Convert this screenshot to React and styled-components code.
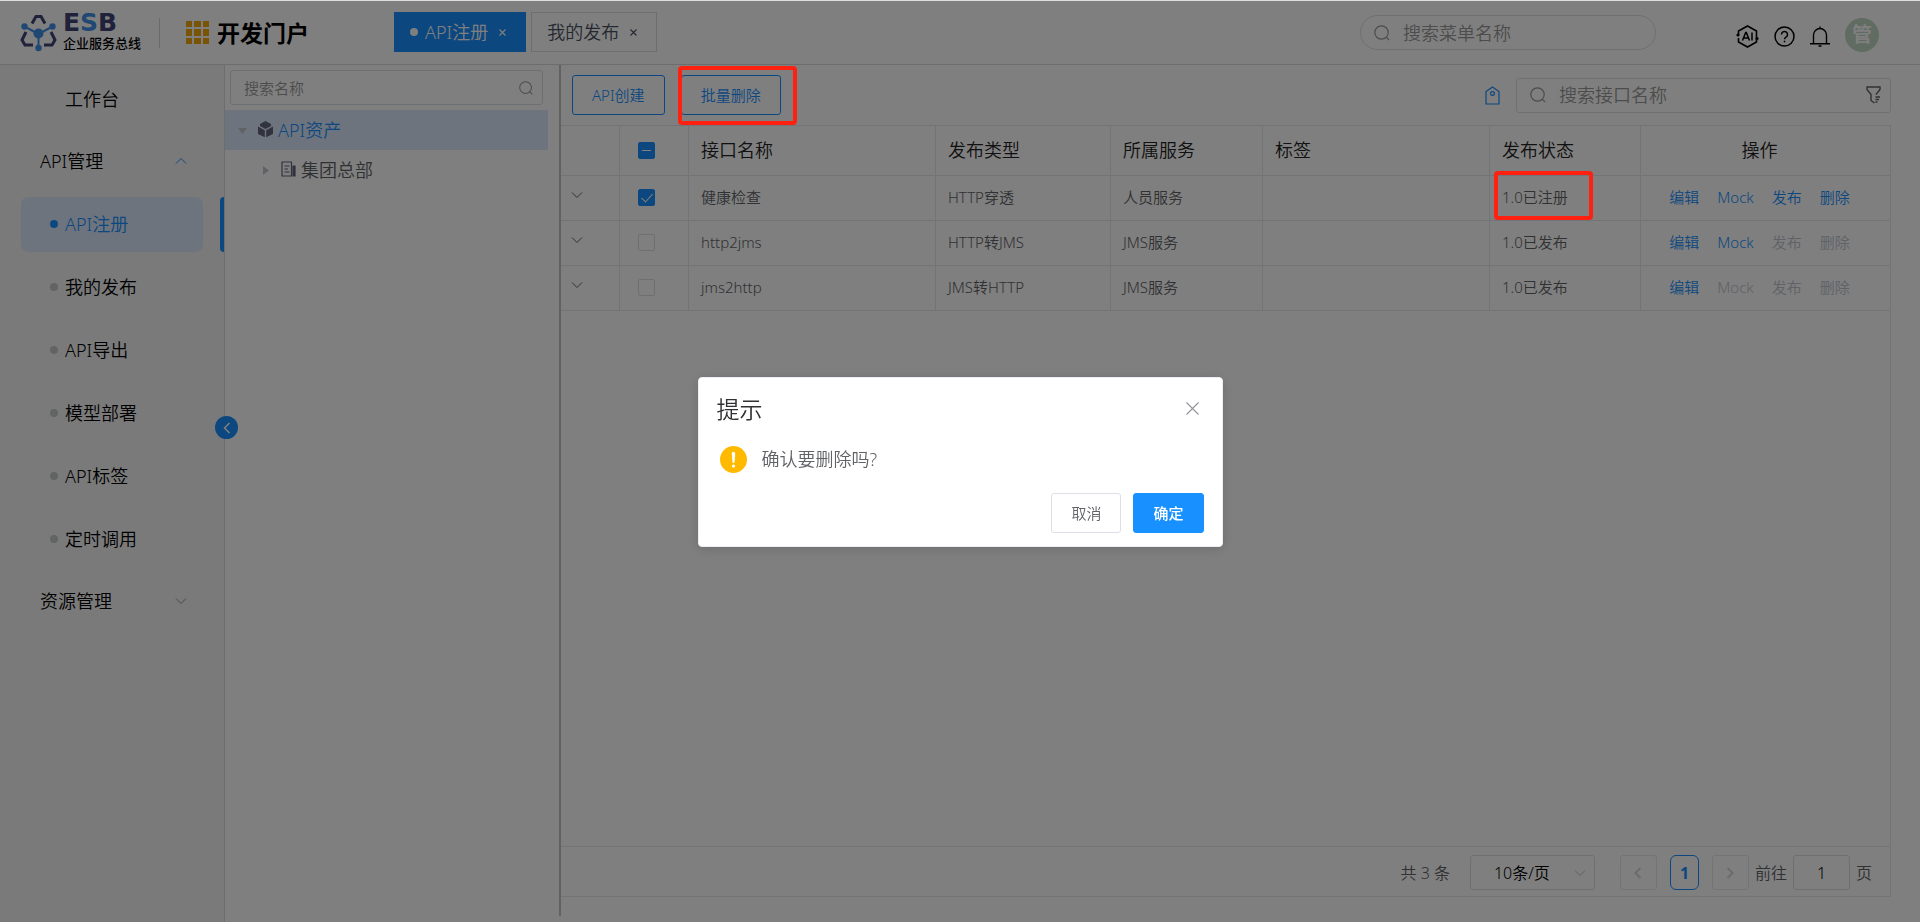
import { useState } from 'react';
import styled, { createGlobalStyle, css } from 'styled-components';

const GlobalStyle = createGlobalStyle`
    * { box-sizing: border-box; }
    body {
        margin: 0;
        background: #fff;
        color: #606266;
        font-family: "Noto Sans", "Noto Sans CJK SC", sans-serif;
        font-size: 15px;
        font-weight: 350;
        line-height: 20px;
    }
    button, input, select { font: inherit; color: inherit; }
    button { cursor: pointer; padding: 0; border: 0; background: none; }
    a { text-decoration: none; }
    svg { display: block; flex: none; }
`;

const Page = styled.div`
    display: flex;
    flex-direction: column;
    min-height: 100vh;
    border-top: 1px solid #dcdfe0;
`;

const Header = styled.header`
    display: flex;
    align-items: center;
    height: 64px;
    padding: 0 41px 0 20px;
    border-bottom: 1px solid #dadada;
`;

const Logo = styled.a`
    display: flex;
    align-items: center;
    gap: 6px;
    width: 140px;
    height: 30px;
    border-right: 1px solid #d4d6dc;
    white-space: nowrap;
`;

const LogoText = styled.div`
    margin-top: -4px;
`;

const LogoName = styled.div`
    color: #3f4474;
    font-family: "DejaVu Sans", sans-serif;
    font-size: 25px;
    font-weight: 700;
    line-height: 24px;

    span { color: #4090e6; }
`;

const LogoSub = styled.div`
    color: #000;
    font-size: 13px;
    font-weight: 500;
    line-height: 16px;
`;

const Portal = styled.div`
    display: flex;
    align-items: center;
    gap: 8px;
    width: 234px;
    padding-left: 26px;
    color: #000;
    font-size: 23px;
    font-weight: 700;
    white-space: nowrap;
`;

const Tabs = styled.nav`
    display: flex;
    gap: 5px;
    flex: 1;
    height: 40px;
    margin-bottom: 1px;
`;

const Tab = styled.div`
    display: flex;
    align-items: center;
    height: 40px;
    padding: 0 19px 0 15px;
    border: 1px solid ${p => (p.$active ? '#1890ff' : '#d8dce5')};
    background: ${p => (p.$active ? '#1890ff' : '#fff')};
    color: ${p => (p.$active ? '#fff' : '#495060')};
    font-size: 18px;
    white-space: nowrap;

    a { color: inherit; }
    button { margin-left: 11px; }
`;

const Dot = styled.i`
    width: 8px;
    height: 8px;
    flex: none;
    margin-right: 7px;
    border-radius: 50%;
    background: ${p => p.$color};
`;

const SearchBox = styled.label`
    display: flex;
    align-items: center;
    width: ${p => p.$width || '100%'};
    height: 35px;
    padding: 0 9px 0 13px;
    border: 1px solid #dcdfe6;
    border-radius: ${p => (p.$round ? 18 : 3)}px;
    color: #999;
    font-size: ${p => p.$size || 18}px;

    input {
        flex: 1;
        min-width: 0;
        padding: 0 0 0 ${p => p.$inset || 0}px;
        border: 0;
        outline: 0;
        background: none;
        color: #606266;
    }
    input::placeholder { color: #999; }
`;

const HeaderIcons = styled.div`
    display: flex;
    align-items: center;
    gap: 15px;
    margin-left: 80px;
    padding-top: 7px;
    color: #000;
`;

const Avatar = styled.button`
    width: 34px;
    height: 34px;
    margin: -3px 0 0;
    border-radius: 50%;
    background: #c0d6c4;
    color: #fff;
    font-size: 20px;
    font-weight: 700;
`;

const Body = styled.div`
    display: flex;
    flex: 1;
`;

const Sidebar = styled.aside`
    position: relative;
    display: flex;
    flex-direction: column;
    width: 225px;
    flex: none;
    padding-top: 4px;
    border-right: 1px solid #dcdcdc;
    background: #f5f5f5;
    color: #000;
    font-size: 18px;
`;

const Collapse = styled.button`
    position: absolute;
    right: -14px;
    top: 351px;
    display: grid;
    place-items: center;
    width: 23px;
    height: 23px;
    border-radius: 50%;
    background: #1890ff;
    color: #fff;
`;

const MenuGroup = styled.button`
    display: flex;
    align-items: center;
    justify-content: space-between;
    width: 100%;
    height: 62px;
    padding: 0 37px 2px ${p => p.$indent}px;
    text-align: left;

    svg { color: ${p => (p.$open ? '#1890ff' : '#909399')}; }
`;

const MenuLink = styled.a`
    display: flex;
    align-items: center;
    height: 55px;
    margin: 4px 21px;
    padding: 0 0 2px 29px;
    border-radius: 7px;
    color: #000;

    ${p => p.$active && css`
        position: relative;
        background: #dde9fb;
        color: #1890ff;

        &::after {
            content: "";
            position: absolute;
            top: 0;
            right: -21px;
            width: 4px;
            height: 100%;
            border-radius: 4px 0 0 4px;
            background: #1890ff;
        }
    `}
`;

const TreePanel = styled.section`
    width: 336px;
    flex: none;
    margin-bottom: 6px;
    border-right: 2px solid #c4c4c4;
`;

const TreeSearch = styled.div`
    padding: 5px 16px 5px 5px;
`;

const TreeRow = styled.button`
    display: flex;
    align-items: center;
    width: 323px;
    height: 40px;
    padding-left: ${p => p.$indent}px;
    background: ${p => (p.$active ? '#dde9fb' : 'none')};
    color: ${p => (p.$active ? '#1890ff' : '#606266')};
    font-size: 18px;

    svg:first-child { margin-right: 11px; color: #c0c4cc; }
    svg + svg { margin: 0 5px 2px 0; color: #62667c; }
`;

const Main = styled.main`
    display: flex;
    flex-direction: column;
    flex: 1;
    min-width: 0;
    padding: 0 29px 25px 0;
`;

const Toolbar = styled.div`
    display: flex;
    align-items: center;
    justify-content: space-between;
    height: 60px;
    padding-left: 11px;
`;

const ToolGroup = styled.div`
    display: flex;
    align-items: center;
    gap: 16px;
`;

const Marked = styled.div`
    position: relative;
`;

/* annotation frame, stays bright above the modal mask */
const Mark = styled.span`
    position: absolute;
    z-index: 20;
    inset: ${p => p.$inset};
    border: 4px solid #ff2010;
    border-radius: 4px;
    pointer-events: none;
`;

const Button = styled.button`
    height: 40px;
    padding: 0 19px;
    border: 1px solid ${p => (p.$plain ? '#dcdfe6' : '#1890ff')};
    border-radius: 3px;
    background: ${p => (p.$primary ? '#1890ff' : '#fff')};
    color: ${p => (p.$primary ? '#fff' : p.$plain ? '#606266' : '#1890ff')};
    font-weight: ${p => (p.$primary ? 500 : 'inherit')};
    white-space: nowrap;
`;

const TagButton = styled.button`
    color: #1890ff;
`;

const Panel = styled.div`
    display: flex;
    flex-direction: column;
    flex: 1;
    border: 1px solid #e6e8f0;
    border-left: 0;
`;

const Table = styled.table`
    width: 100%;
    table-layout: fixed;
    border-spacing: 0;

    th, td {
        height: 45px;
        padding: 0 12px 2px;
        border-right: 1px solid #e6e8f0;
        border-bottom: 1px solid #e6e8f0;
        text-align: left;
        vertical-align: middle;
    }
    th {
        height: 50px;
        padding-bottom: 1px;
        color: #222;
        font-size: 18px;
        font-weight: inherit;
    }
    th:last-child, td:last-child {
        padding-right: 24px;
        border-right: 0;
        text-align: center;
    }
`;

const Col = styled.col`
    width: ${p => (p.$width ? p.$width + 'px' : 'auto')};
`;

const ExpandButton = styled.button`
    display: block;
    margin-left: -2px;
    padding-bottom: 4px;
    color: #606266;
`;

const Checkbox = styled.input`
    appearance: none;
    position: relative;
    display: block;
    width: 17px;
    height: 17px;
    margin: 0 0 0 6px;
    border: 1px solid ${p => (p.checked || p.$partial ? '#1890ff' : '#dcdfe6')};
    border-radius: 2px;
    background: ${p => (p.checked || p.$partial ? '#1890ff' : '#fff')};

    ${p => p.checked && css`
        &::after {
            content: "";
            position: absolute;
            left: 5px;
            top: 1px;
            width: 5px;
            height: 10px;
            border: solid #fff;
            border-width: 0 1px 1px 0;
            transform: rotate(42deg);
        }
    `}
    ${p => p.$partial && css`
        &::after {
            content: "";
            position: absolute;
            left: 3px;
            top: 7px;
            width: 9px;
            height: 1px;
            background: #fff;
        }
    `}
`;

const StatusCell = styled.td`
    position: relative;
`;

const Actions = styled.div`
    display: flex;
    justify-content: center;
    gap: 18px;
`;

const ActionButton = styled.button`
    color: #1890ff;
    &:disabled { color: #c0c4cc; cursor: default; }
`;

const Pagination = styled.footer`
    display: flex;
    align-items: center;
    justify-content: flex-end;
    height: 50px;
    margin-top: auto;
    padding: 2px 18px 0 0;
    border-top: 1px solid #e6e8f0;
    font-size: 16px;
    white-space: nowrap;
`;

const PageSize = styled.label`
    position: relative;
    width: 125px;
    margin: 0 25px 0 20px;
    color: #000;

    select {
        appearance: none;
        width: 100%;
        height: 35px;
        padding: 0 0 0 23px;
        border: 1px solid #dcdfe6;
        border-radius: 3px;
        background: #fff;
    }
    svg {
        position: absolute;
        right: 9px;
        top: 12px;
        color: #c0c4cc;
    }
`;

const PageButton = styled.button`
    display: grid;
    place-items: center;
    width: ${p => (p.$current ? 29 : 37)}px;
    height: 35px;
    margin-right: ${p => p.$gap}px;
    border: 1px solid ${p => (p.$current ? '#1890ff' : '#e6e8ee')};
    border-radius: ${p => (p.$current ? 6 : 3)}px;
    color: ${p => (p.$current ? '#1890ff' : '#d4d7de')};
    font-weight: 700;
`;

const Jumper = styled.label`
    display: flex;
    align-items: center;
    gap: 6px;

    input {
        width: 57px;
        height: 35px;
        padding: 0;
        border: 1px solid #dcdfe6;
        border-radius: 3px;
        color: #000;
        text-align: center;
    }
`;

const Mask = styled.div`
    position: fixed;
    z-index: 10;
    inset: 1px 0 0;
    display: grid;
    place-items: center;
    background: rgba(0, 0, 0, 0.5);
`;

const Dialog = styled.div`
    width: 525px;
    padding: 17px 18px 13px;
    border: 1px solid #ebeef5;
    border-radius: 4px;
    background: #fff;
    box-shadow: 0 2px 12px rgba(0, 0, 0, 0.15);
`;

const DialogHead = styled.div`
    display: flex;
    align-items: center;
    justify-content: space-between;
    height: 28px;
    padding-right: 5px;
    color: #909399;

    h2 {
        margin: 0;
        color: #303133;
        font-size: 23px;
        font-weight: inherit;
    }
`;

const DialogBody = styled.div`
    display: flex;
    align-items: center;
    gap: 15px;
    padding: 23px 3px 20px;
    font-size: 18px;

    p { margin: 0; }
`;

const DialogFoot = styled.div`
    display: flex;
    justify-content: flex-end;
    gap: 12px;
`;

const LogoIcon = () => (
    <svg width="37" height="38" viewBox="0 0 37 38" fill="none">
        <g stroke="#3f4474" strokeWidth="3">
            <path d="M12 9.500l4-7h5l4 7" />
            <path d="M6 18l-4 8 3 5h8" />
            <path d="M31 18l4 8-3 5h-8" />
        </g>
        <path d="M4.500 12.500L18.500 20l14-7.500M18.500 20v14" stroke="#4090e6" strokeWidth="2" />
        <g fill="#4090e6">
            <circle cx="18.500" cy="19.500" r="5" />
            <circle cx="4.500" cy="12.500" r="3.200" />
            <circle cx="32.500" cy="12.500" r="3.200" />
            <circle cx="18.500" cy="34" r="3.200" />
        </g>
    </svg>
);

const GridIcon = () => (
    <svg width="23" height="23" viewBox="0 0 23 23" fill="#f5a80c">
        {[[0, 6], [8, 7], [17, 6]].map(([y, h]) => (
            <path key={y} d={`M0 ${y}h6v${h}h-6zM8 ${y}h7v${h}h-7zM17 ${y}h6v${h}h-6z`} />
        ))}
    </svg>
);

const SearchIcon = ({ size = 16 }) => (
    <svg width={size} height={size} viewBox="0 0 16 16" fill="none" stroke="currentColor" strokeWidth="1.200">
        <circle cx="7.500" cy="7.500" r="6.700" />
        <path d="M12.200 12.200l3 3" />
    </svg>
);

const Chevron = ({ dir = 'down', size = 12, weight = 1 }) => {
    const paths = {
        down: 'M1 3.500l5 5 5-5',
        up: 'M1 8.500l5-5 5 5',
        left: 'M8.500 1l-5 5 5 5',
        right: 'M3.500 1l5 5-5 5',
    };
    return (
        <svg width={size} height={size} viewBox="0 0 12 12" fill="none" stroke="currentColor" strokeWidth={weight}>
            <path d={paths[dir]} />
        </svg>
    );
};

const CloseIcon = ({ size = 7 }) => (
    <svg width={size} height={size} viewBox={`0 0 ${size} ${size}`} fill="none" stroke="currentColor" strokeWidth="1.100">
        <path d={`M.5.5L${size - 0.5} ${size - 0.5}M${size - 0.5}.5L.5 ${size - 0.5}`} />
    </svg>
);

const AiIcon = () => (
    <svg width="23" height="23" viewBox="0 0 23 23" fill="none" stroke="currentColor" strokeWidth="1.600">
        <path d="M2.500 9.500V6l9-5 9 5v7M20.500 13.500V17l-9 5-9-5v-4" />
        <path d="M6.500 15.500l3.200-8h.6l3.200 8M7.700 13h4.600M16 7.500v8" strokeWidth="1.500" />
        <circle cx="2" cy="10" r="1.600" fill="currentColor" stroke="none" />
        <circle cx="21" cy="13.500" r="1.600" fill="currentColor" stroke="none" />
    </svg>
);

const HelpIcon = () => (
    <svg width="21" height="21" viewBox="0 0 21 21" fill="none" stroke="currentColor" strokeWidth="1.500">
        <circle cx="10.500" cy="10.500" r="9.500" />
        <path d="M7.500 8.500a3 3 0 1 1 4.500 2.600c-1 .6-1.500 1-1.500 2.200" />
        <path d="M10.500 14.700v1.600" />
    </svg>
);

const BellIcon = () => (
    <svg width="20" height="21" viewBox="0 0 20 21" fill="none" stroke="currentColor" strokeWidth="1.400">
        <path d="M3.500 17.500V9a6.500 6.500 0 0 1 13 0v8.500M0 17.800h20M10 .5v2M8.500 20h3" />
    </svg>
);

const TagIcon = () => (
    <svg width="15" height="19" viewBox="0 0 15 19" fill="none" stroke="currentColor" strokeWidth="1.200">
        <path d="M1 5.500L7.500 1 14 5.500V18H1z" />
        <circle cx="7.500" cy="7.500" r="1.900" />
    </svg>
);

const FilterIcon = () => (
    <svg width="15" height="18" viewBox="0 0 15 18" fill="none" stroke="#606266" strokeWidth="1.400">
        <path d="M8.500 17L5 14.500V8.500L1 3.500V1h13v2.500L10 8.500M9.500 11h4.500M9.500 13.500h3.500M9.500 16h2" />
    </svg>
);

const Caret = ({ open }) => (
    <svg width="9" height="9" viewBox="0 0 9 9" fill="currentColor">
        <path d={open ? 'M0 2h9L4.500 8z' : 'M2 0l6 4.500L2 9z'} />
    </svg>
);

const CubeIcon = () => (
    <svg width="15" height="17" viewBox="0 0 15 17" fill="currentColor">
        <path d="M7.500 0l5.500 3v2L7.500 8 2 5V3zM0 5.500l6.800 3.800v7L0 13zM15 5.500L8.200 9.300v7L15 13z" />
    </svg>
);

const OfficeIcon = () => (
    <svg width="15" height="16" viewBox="0 0 15 16" fill="none" stroke="currentColor" strokeWidth="1.200">
        <path d="M1 1h9.500v14H1zM3.500 5h5M3.500 8h3.500M3.500 11h5" />
        <path d="M12 5h2v10h-2z" fill="currentColor" />
    </svg>
);

const WarningIcon = () => (
    <svg width="27" height="27" viewBox="0 0 27 27">
        <circle cx="13.500" cy="13.500" r="13.500" fill="#ffba00" />
        <path d="M11.800 7.500a1.700 1.700 0 0 1 3.400 0l-.6 8.500a1.100 1.100 0 0 1-2.200 0z" fill="#fff" />
        <circle cx="13.500" cy="20" r="1.600" fill="#fff" />
    </svg>
);

const menu = ['API注册', '我的发布', 'API导出', '模型部署', 'API标签', '定时调用'];

const rows = [
    { name: '健康检查', type: 'HTTP穿透', service: '人员服务', status: '1.0已注册', enabled: ['编辑', 'Mock', '发布', '删除'], marked: true },
    { name: 'http2jms', type: 'HTTP转JMS', service: 'JMS服务', status: '1.0已发布', enabled: ['编辑', 'Mock'] },
    { name: 'jms2http', type: 'JMS转HTTP', service: 'JMS服务', status: '1.0已发布', enabled: ['编辑'] },
];

const actions = ['编辑', 'Mock', '发布', '删除'];

function TopBar() {
    return (
        <Header>
            <Logo href="#">
                <LogoIcon />
                <LogoText>
                    <LogoName>E<span>S</span>B</LogoName>
                    <LogoSub>企业服务总线</LogoSub>
                </LogoText>
            </Logo>
            <Portal><GridIcon />开发门户</Portal>
            <Tabs>
                <Tab $active>
                    <Dot $color="#fff" />
                    <a href="#register">API注册</a>
                    <button aria-label="关闭 API注册"><CloseIcon /></button>
                </Tab>
                <Tab>
                    <a href="#publish">我的发布</a>
                    <button aria-label="关闭 我的发布"><CloseIcon /></button>
                </Tab>
            </Tabs>
            <SearchBox $width="296px" $round $inset={13}>
                <SearchIcon />
                <input type="text" placeholder="搜索菜单名称" aria-label="搜索菜单名称" />
            </SearchBox>
            <HeaderIcons>
                <button aria-label="AI"><AiIcon /></button>
                <button aria-label="帮助"><HelpIcon /></button>
                <button aria-label="消息"><BellIcon /></button>
                <Avatar>管</Avatar>
            </HeaderIcons>
        </Header>
    );
}

function SideMenu() {
    return (
        <Sidebar>
            <MenuGroup $indent={65}>工作台</MenuGroup>
            <MenuGroup $indent={40} $open>API管理<Chevron dir="up" /></MenuGroup>
            {menu.map((item, i) => (
                <MenuLink key={item} href="#" $active={i === 0}>
                    <Dot $color={i === 0 ? '#1890ff' : '#c4c8c6'} />
                    {item}
                </MenuLink>
            ))}
            <MenuGroup $indent={40}>资源管理<Chevron /></MenuGroup>
            <Collapse aria-label="收起菜单"><Chevron dir="left" weight={1.5} /></Collapse>
        </Sidebar>
    );
}

function AssetTree() {
    return (
        <TreePanel>
            <TreeSearch>
                <SearchBox $size={15}>
                    <input type="text" placeholder="搜索名称" aria-label="搜索名称" />
                    <SearchIcon size={14} />
                </SearchBox>
            </TreeSearch>
            <TreeRow $indent={13} $active><Caret open /><CubeIcon />API资产</TreeRow>
            <TreeRow $indent={36}><Caret /><OfficeIcon />集团总部</TreeRow>
        </TreePanel>
    );
}

function ApiTable() {
    const [checked, setChecked] = useState([true, false, false]);
    const count = checked.filter(Boolean).length;
    const all = count === rows.length;

    const toggle = (index) => {
        setChecked(checked.map((c, i) => (i === index ? !c : c)));
    };

    return (
        <Table>
            <colgroup>
                <Col $width={59} />
                <Col $width={69} />
                <Col />
                <Col $width={175} />
                <Col $width={152} />
                <Col $width={227} />
                <Col $width={151} />
                <Col $width={249} />
            </colgroup>
            <thead>
                <tr>
                    <th />
                    <th>
                        <Checkbox
                            type="checkbox"
                            aria-label="全选"
                            checked={all}
                            $partial={count > 0 && !all}
                            onChange={() => setChecked(rows.map(() => !all))}
                        />
                    </th>
                    <th>接口名称</th>
                    <th>发布类型</th>
                    <th>所属服务</th>
                    <th>标签</th>
                    <th>发布状态</th>
                    <th>操作</th>
                </tr>
            </thead>
            <tbody>
                {rows.map((row, i) => (
                    <tr key={row.name}>
                        <td><ExpandButton aria-label={'展开 ' + row.name}><Chevron /></ExpandButton></td>
                        <td>
                            <Checkbox
                                type="checkbox"
                                aria-label={'选择 ' + row.name}
                                checked={checked[i]}
                                onChange={() => toggle(i)}
                            />
                        </td>
                        <td>{row.name}</td>
                        <td>{row.type}</td>
                        <td>{row.service}</td>
                        <td />
                        <StatusCell>
                            {row.status}
                            {row.marked && <Mark $inset="-5px 47px 0 4px" />}
                        </StatusCell>
                        <td>
                            <Actions>
                                {actions.map(a => (
                                    <ActionButton key={a} disabled={!row.enabled.includes(a)}>{a}</ActionButton>
                                ))}
                            </Actions>
                        </td>
                    </tr>
                ))}
            </tbody>
        </Table>
    );
}

function Pager() {
    return (
        <Pagination>
            <span>共 3 条</span>
            <PageSize>
                <select aria-label="每页条数">
                    <option>10条/页</option>
                    <option>20条/页</option>
                </select>
                <Chevron />
            </PageSize>
            <PageButton $gap={13} aria-label="上一页"><Chevron dir="left" weight={2} /></PageButton>
            <PageButton $gap={13} $current>1</PageButton>
            <PageButton $gap={6} aria-label="下一页"><Chevron dir="right" weight={2} /></PageButton>
            <Jumper>前往<input type="text" defaultValue="1" />页</Jumper>
        </Pagination>
    );
}

function ConfirmDialog({ onClose }) {
    return (
        <Mask>
            <Dialog role="dialog" aria-modal="true" aria-labelledby="confirm-title">
                <DialogHead>
                    <h2 id="confirm-title">提示</h2>
                    <button aria-label="关闭" onClick={onClose}><CloseIcon size={13} /></button>
                </DialogHead>
                <DialogBody>
                    <WarningIcon />
                    <p>确认要删除吗?</p>
                </DialogBody>
                <DialogFoot>
                    <Button $plain onClick={onClose}>取消</Button>
                    <Button $primary onClick={onClose}>确定</Button>
                </DialogFoot>
            </Dialog>
        </Mask>
    );
}

function App() {
    const [open, setOpen] = useState(true);

    return (
        <Page>
            <GlobalStyle />
            <TopBar />
            <Body>
                <SideMenu />
                <AssetTree />
                <Main>
                    <Toolbar>
                        <ToolGroup>
                            <Button>API创建</Button>
                            <Marked>
                                <Button onClick={() => setOpen(true)}>批量删除</Button>
                                <Mark $inset="-9px -16px -10px -3px" />
                            </Marked>
                        </ToolGroup>
                        <ToolGroup>
                            <TagButton aria-label="标签"><TagIcon /></TagButton>
                            <SearchBox $width="375px" $inset={13}>
                                <SearchIcon />
                                <input type="text" placeholder="搜索接口名称" aria-label="搜索接口名称" />
                                <FilterIcon />
                            </SearchBox>
                        </ToolGroup>
                    </Toolbar>
                    <Panel>
                        <ApiTable />
                        <Pager />
                    </Panel>
                </Main>
            </Body>
            {open && <ConfirmDialog onClose={() => setOpen(false)} />}
        </Page>
    );
}

export default App;
